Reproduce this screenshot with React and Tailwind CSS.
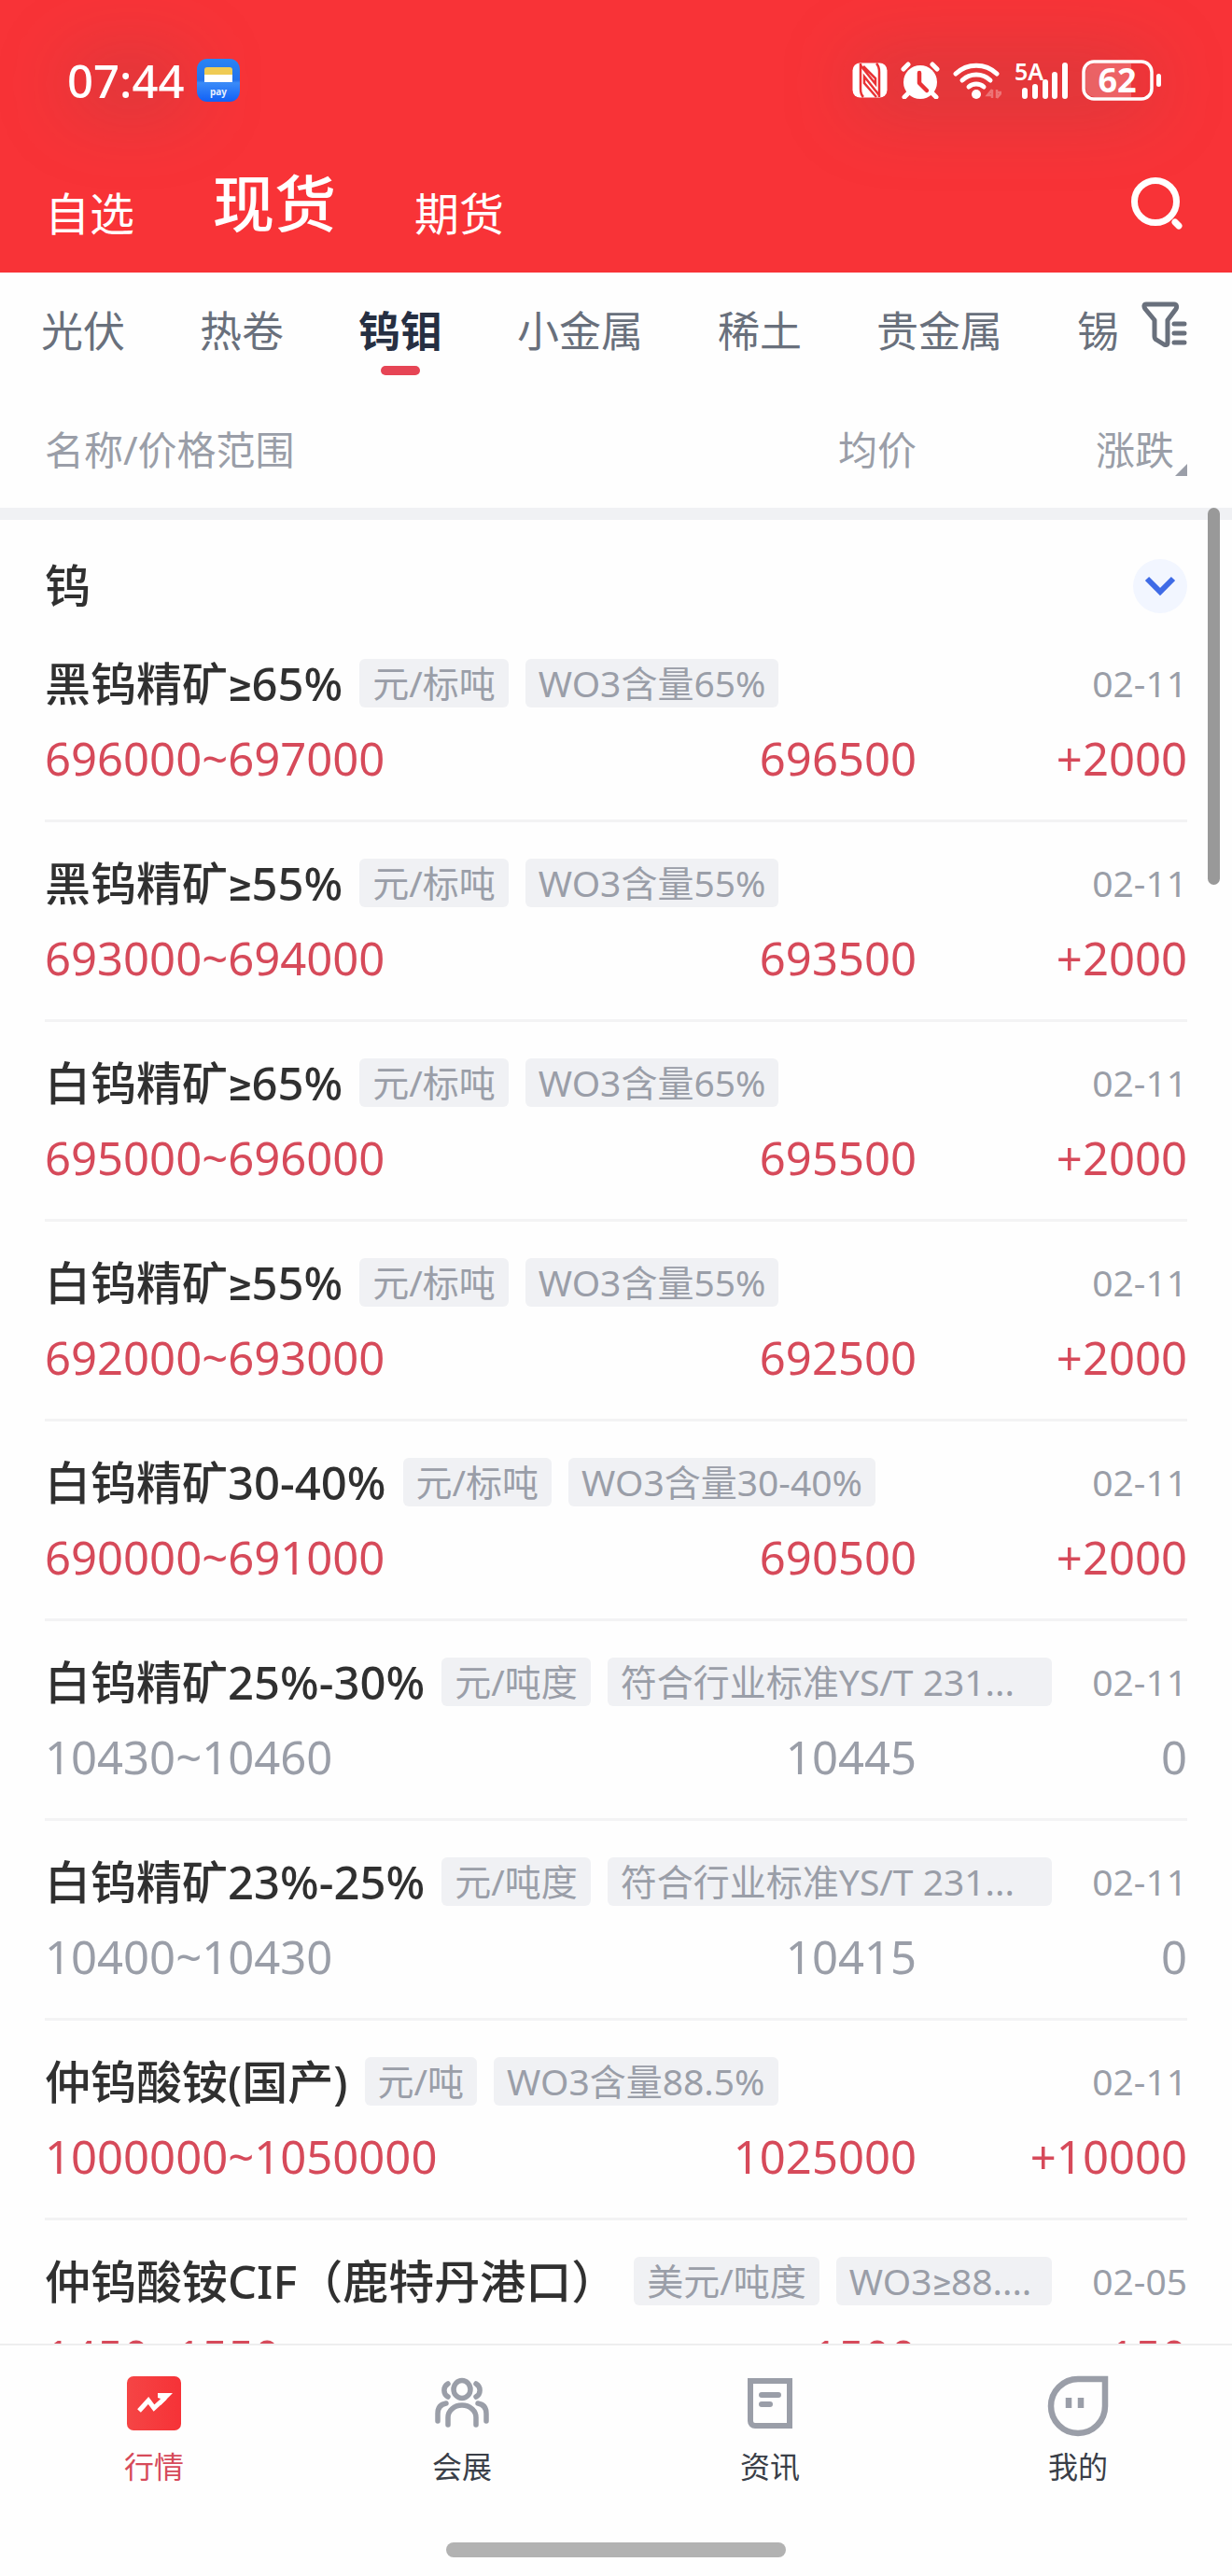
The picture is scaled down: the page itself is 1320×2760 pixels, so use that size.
import React, { useState } from 'react';

const topTabs = ['自选', '现货', '期货'];
const metals = ['光伏', '热卷', '钨钼', '小金属', '稀土', '贵金属', '锡'];

const prices = [
  { name: '黑钨精矿≥65%', unit: '元/标吨', spec: 'WO3含量65%', date: '02-11', range: '696000~697000', avg: '696500', change: '+2000' },
  { name: '黑钨精矿≥55%', unit: '元/标吨', spec: 'WO3含量55%', date: '02-11', range: '693000~694000', avg: '693500', change: '+2000' },
  { name: '白钨精矿≥65%', unit: '元/标吨', spec: 'WO3含量65%', date: '02-11', range: '695000~696000', avg: '695500', change: '+2000' },
  { name: '白钨精矿≥55%', unit: '元/标吨', spec: 'WO3含量55%', date: '02-11', range: '692000~693000', avg: '692500', change: '+2000' },
  { name: '白钨精矿30-40%', unit: '元/标吨', spec: 'WO3含量30-40%', date: '02-11', range: '690000~691000', avg: '690500', change: '+2000' },
  { name: '白钨精矿25%-30%', unit: '元/吨度', spec: '符合行业标准YS/T 231...', date: '02-11', range: '10430~10460', avg: '10445', change: '0', wide: true },
  { name: '白钨精矿23%-25%', unit: '元/吨度', spec: '符合行业标准YS/T 231...', date: '02-11', range: '10400~10430', avg: '10415', change: '0', wide: true },
  { name: '仲钨酸铵(国产)', unit: '元/吨', spec: 'WO3含量88.5%', date: '02-11', range: '1000000~1050000', avg: '1025000', change: '+10000' },
  { name: '仲钨酸铵CIF（鹿特丹港口）', unit: '美元/吨度', spec: 'WO3≥88....', date: '02-05', range: '1450~1550', avg: '1500', change: '+150', wide: true }
];

const StatusBar = () => (
  <div className="relative flex h-14 items-center justify-between pl-[72px] pr-[75px] text-white">
    <div className="absolute left-[70px] top-0 h-16 w-[140px] rounded-full bg-[#555]/20 blur-2xl" />
    <div className="absolute right-[80px] top-0 h-16 w-[330px] rounded-full bg-[#555]/20 blur-2xl" />
    <div className="relative flex items-center gap-3.5">
      <span className="text-[49px] leading-14 font-medium">07:44</span>
      <svg width="46" height="46" viewBox="0 0 46 46" aria-hidden="true">
        <defs>
          <linearGradient id="pay" x1="0" y1="0" x2="0" y2="1">
            <stop offset="0" stopColor="#2a84f5" />
            <stop offset="0.5" stopColor="#2372ec" />
            <stop offset="0.56" stopColor="#3a8bf8" />
            <stop offset="1" stopColor="#1160f5" />
          </linearGradient>
        </defs>
        <rect width="46" height="46" rx="11" fill="url(#pay)" />
        <path d="M8 17v-5a3 3 0 0 1 3-3h24a3 3 0 0 1 3 3v5z" fill="#efcb55" />
        <path d="M8 17h30v8H8z" fill="#fff" />
        <text x="23" y="39" fill="#e6f0ff" fontSize="10" fontWeight="700" textAnchor="middle">pay</text>
      </svg>
    </div>
    <div className="relative flex items-center gap-3.5">
      <svg width="38" height="38" viewBox="0 0 38 38" fill="none" aria-hidden="true">
        <rect x="0.5" y="0.5" width="37" height="37" rx="8" fill="#fff" />
        <g stroke="#e93235" strokeWidth="2.5">
          <path d="M9 1v27c0 5 1 7 3 9" />
          <path d="M29 37V10c0-5-1-7-3-9" />
          <path d="M9 3l16 20v-6L12 4M29 35L13 15v7l13 15" />
        </g>
      </svg>
      <svg width="42" height="40" viewBox="0 0 42 40" aria-hidden="true">
        <circle cx="21" cy="22" r="18" fill="#fff" />
        <g stroke="#fff" strokeWidth="5" strokeLinecap="round">
          <path d="M3 8l5-5M39 8l-5-5M8 34l-4 4M34 34l4 4" />
        </g>
        <path d="M20 12v11l8 8" fill="none" stroke="#e93235" strokeWidth="4.5" strokeLinecap="round" strokeLinejoin="round" />
      </svg>
      <svg width="52" height="40" viewBox="0 0 52 40" fill="none" aria-hidden="true">
        <g stroke="#fff" strokeWidth="5" strokeLinecap="round">
          <path d="M3 13a32 32 0 0 1 44 0" />
          <path d="M10 20a22 22 0 0 1 30 0" />
          <path d="M17 27a12 12 0 0 1 16 0" />
        </g>
        <circle cx="25" cy="35" r="5" fill="#fff" />
        <path d="M42 30v9M42 30l-5 6h5M47 39v-9M47 39l5-6h-5" stroke="#fff" strokeWidth="2.5" opacity="0.3" />
      </svg>
      <svg width="58" height="40" viewBox="0 0 58 40" className="overflow-visible" aria-hidden="true">
        <text x="0" y="20" fill="#fff" fontSize="25" fontWeight="600">5A</text>
        <g stroke="#fff" strokeWidth="6" strokeLinecap="round">
          <path d="M11 31v6M22 27v10M33 22v15M43 14v23M54 4v33" />
        </g>
      </svg>
      <svg width="86" height="44" viewBox="0 0 86 44" className="overflow-visible" aria-hidden="true">
        <path d="M14 4h39v36H14A10 10 0 0 1 4 30V14A10 10 0 0 1 14 4z" fill="#fff" opacity="0.22" />
        <rect x="2" y="2" width="73" height="40" rx="11" fill="none" stroke="#fff" strokeWidth="3.5" />
        <rect x="80" y="15" width="5" height="14" rx="2.5" fill="#fff" />
        <text x="38" y="35" fill="#fff" fontSize="36" fontWeight="700" textAnchor="middle">62</text>
      </svg>
    </div>
  </div>
);

const PriceItem = ({ item, first }) => {
  const color = item.change === '0' ? 'text-[#9a9ea8]' : 'text-[#d64a5a]';

  return (
    <>
      <tr>
        <td colSpan={3} className="px-12">
          <div className={`flex items-center gap-[18px] border-t-[3px] pt-[35px] text-[39px] leading-[52px] whitespace-nowrap text-[#9a9ea8] ${first ? 'border-transparent' : 'border-[#f3f3f4]'}`}>
            <span className="text-[49px] leading-[60px] font-medium text-[#303030]">{item.name}</span>
            <span className="rounded-md bg-[#f0f1f4] px-3.5">{item.unit}</span>
            <span className={item.wide ? 'min-w-0 flex-1 truncate rounded-md bg-[#f0f1f4] px-3.5' : 'rounded-md bg-[#f0f1f4] px-3.5'}>
              {item.spec}
            </span>
            <span className="ml-auto min-w-[127px] text-right">{item.date}</span>
          </div>
        </td>
      </tr>
      <tr className={`text-[49px] leading-[60px] ${color}`}>
        <td className="pt-5 pb-9 pl-12 whitespace-nowrap">{item.range}</td>
        <td className="pt-5 pb-9 text-right">{item.avg}</td>
        <td className="pt-5 pb-9 pr-12 text-right">{item.change}</td>
      </tr>
    </>
  );
};

const navItems = [
  {
    label: '行情',
    icon: (
      <svg width="66" height="66" viewBox="0 0 66 66" aria-hidden="true">
        <defs>
          <linearGradient id="quote" x1="0" y1="0" x2="1" y2="0">
            <stop offset="0" stopColor="#f54545" />
            <stop offset="1" stopColor="#f63237" />
          </linearGradient>
        </defs>
        <rect x="4" y="1" width="58" height="58" rx="7" fill="url(#quote)" />
        <path d="M17 38l10-11 6 8 12-11" fill="none" stroke="#fff" strokeWidth="5" />
        <path d="M37 19h16L40 32v-7l-3-1z" fill="#fff" />
      </svg>
    )
  },
  {
    label: '会展',
    icon: (
      <svg width="66" height="66" viewBox="0 0 66 66" fill="none" stroke="#9a9ea8" strokeWidth="5.5" strokeLinecap="round" aria-hidden="true">
        <ellipse cx="33" cy="15" rx="9" ry="9.5" />
        <path d="M18 53V45a15 13 0 0 1 30 0v8" />
        <path d="M18 9a8 8 0 0 0 0 14M48 9a8 8 0 0 1 0 14" />
        <path d="M7 49V41c0-6 3-10 9-11M59 49V41c0-6-3-10-9-11" />
      </svg>
    )
  },
  {
    label: '资讯',
    icon: (
      <svg width="66" height="66" viewBox="0 0 66 66" fill="none" stroke="#9a9ea8" strokeWidth="6" aria-hidden="true">
        <path d="M12 6h42v48H17a5 5 0 0 1-5-5z" />
        <path d="M24 21h18M24 31h9" strokeLinecap="round" />
      </svg>
    )
  },
  {
    label: '我的',
    icon: (
      <svg width="66" height="66" viewBox="0 0 66 66" fill="none" stroke="#9a9ea8" strokeWidth="6.5" aria-hidden="true">
        <path d="M33 4h29v29A29 29 0 1 1 33 4z" />
        <path d="M23 24v11M36 24v11" />
      </svg>
    )
  }
];

const App = () => {
  const [section, setSection] = useState('现货');
  const [metal, setMetal] = useState('钨钼');
  const [page, setPage] = useState('行情');
  const [open, setOpen] = useState(true);

  return (
    <div className="flex h-screen flex-col overflow-hidden bg-[#fefefe] font-['Noto_Sans',Roboto,'Noto_Sans_CJK_SC',sans-serif]">
      <header className="bg-[#f83337] pt-[58px] text-white">
        <StatusBar />
        <div className="flex h-[178px] items-center justify-between px-12 pt-7">
          <nav className="flex items-end gap-[84px]">
            {topTabs.map((tab) => (
              <button
                key={tab}
                onClick={() => setSection(tab)}
                className={tab === section ? 'text-[66px] leading-[80px] font-medium' : 'text-[48px] leading-[56px]'}
              >
                {tab}
              </button>
            ))}
          </nav>
          <button aria-label="搜索">
            <svg width="60" height="60" viewBox="0 0 60 60" fill="none" stroke="#fff" strokeWidth="7" strokeLinecap="round" aria-hidden="true">
              <circle cx="26" cy="29" r="22.5" />
              <path d="M47 51l4 4" />
            </svg>
          </button>
        </div>
      </header>

      <div className="flex h-[126px] shrink-0 items-center pr-12 pl-11">
        <nav className="flex h-full min-w-0 flex-1 items-center gap-20 overflow-hidden whitespace-nowrap text-[45px] text-[#69707c]">
          {metals.map((item) => (
            <button
              key={item}
              onClick={() => setMetal(item)}
              className={item === metal ? 'relative h-full font-bold text-[#262f42]' : 'h-full'}
            >
              {item}
              {item === metal && <span className="absolute bottom-4 left-1/2 h-2.5 w-[42px] -translate-x-1/2 rounded-full bg-[#e64555]" />}
            </button>
          ))}
        </nav>
        <button aria-label="筛选" className="mb-4">
          <svg width="50" height="50" viewBox="0 0 50 50" fill="none" stroke="#69707c" strokeWidth="5" strokeLinejoin="round" strokeLinecap="round" aria-hidden="true">
            <path d="M6 4h30c3 0 3 3 2 5l-9 12v24c0 3-2 3-4 2l-8-5c-2-1-2-2-2-4V21L5 9C3 6 4 4 6 4z" />
            <path d="M36 25h11M36 35h11M36 45h11" />
          </svg>
        </button>
      </div>

      <main className="min-h-0 flex-1 overflow-hidden">
        <table className="w-full table-fixed border-collapse">
          <thead>
            <tr className="h-[126px] text-[42px] text-[#9a9ea8]">
              <th className="pl-12 text-left font-normal">名称/价格范围</th>
              <th className="w-[300px] text-right font-normal">均价</th>
              <th className="w-[338px] pr-12 text-right font-normal">
                <span className="relative pr-3.5">
                  涨跌
                  <svg className="absolute right-0 bottom-0" width="13" height="13" viewBox="0 0 13 13" fill="#9a9ea8" aria-hidden="true">
                    <path d="M13 0v13H0z" />
                  </svg>
                </span>
              </th>
            </tr>
            <tr>
              <td colSpan={3} className="relative h-[13px] bg-[#f0f1f4] p-0">
                <div className="absolute top-0 right-[13px] h-[404px] w-[13px] rounded-full bg-[#999]" />
              </td>
            </tr>
            <tr>
              <th colSpan={3} className="px-12 pt-[42px] pb-[7px] font-medium">
                <div className="flex h-[58px] items-center justify-between text-[49px] text-[#303030]">
                  钨
                  <button aria-label="展开" onClick={() => setOpen(!open)} className="flex size-[58px] items-center justify-center rounded-full bg-[#f2f6ff]">
                    <svg width="34" height="22" viewBox="0 0 34 22" fill="none" stroke="#3f6be6" strokeWidth="6" aria-hidden="true">
                      <path d="M3 3l14 14L31 3" />
                    </svg>
                  </button>
                </div>
              </th>
            </tr>
          </thead>
          <tbody>
            {open && prices.map((item, index) => <PriceItem key={item.name} item={item} first={index === 0} />)}
          </tbody>
        </table>
      </main>

      <footer className="shrink-0 border-t-2 border-[#eeeeef] pt-8">
        <nav className="grid grid-cols-4">
          {navItems.map((item) => (
            <a
              key={item.label}
              href="#"
              onClick={() => setPage(item.label)}
              className={`flex flex-col items-center gap-2 text-[32px] leading-[48px] ${item.label === page ? 'text-[#d64a5a]' : 'text-[#3a3f48]'}`}
            >
              {item.icon}
              {item.label}
            </a>
          ))}
        </nav>
        <div className="mx-auto mt-[57px] mb-5 h-4 w-[364px] rounded-lg bg-[#b2b2b2]" />
      </footer>
    </div>
  );
};

export default App;
